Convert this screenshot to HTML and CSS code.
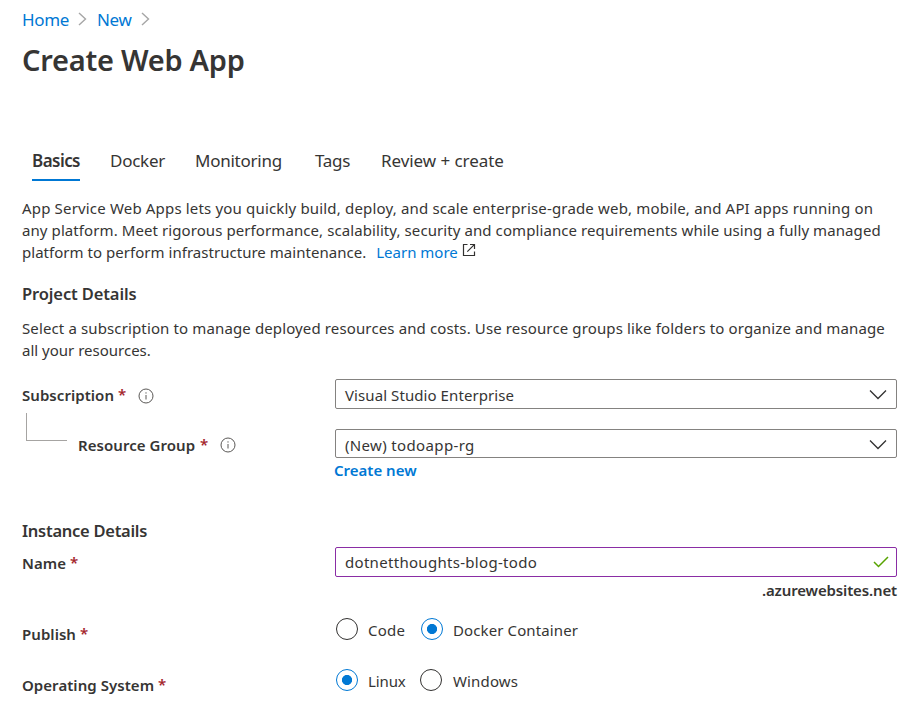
FILE: index.html
```
<!DOCTYPE html>
<html lang="en">
<head>
<meta charset="utf-8">
<title>Create Web App</title>
<link rel="stylesheet" href="styles.css">
</head>
<body>
<main class="page">
  <nav class="crumbs">
    <a>Home</a>
    <svg width="9" height="14" viewBox="0 0 9 14"><path d="M1 1l6.500 6L1 13"/></svg>
    <a class="crumb-new">New</a>
    <svg width="9" height="14" viewBox="0 0 9 14"><path d="M1 1l6.500 6L1 13"/></svg>
  </nav>
  <h1>Create Web App</h1>
  <div class="tabs">
    <a class="tab active">Basics</a>
    <a class="tab docker">Docker</a>
    <a class="tab monitoring">Monitoring</a>
    <a class="tab tags">Tags</a>
    <a class="tab review">Review + create</a>
  </div>
  <p class="intro">
    <span class="line l1">App Service Web Apps lets you quickly build, deploy, and scale enterprise-grade web, mobile, and API apps running on</span>
    <span class="line l2">any platform. Meet rigorous performance, scalability, security and compliance requirements while using a fully managed</span>
    <span class="line l3"><span>platform to perform infrastructure maintenance.</span><a class="learn">Learn more</a><svg class="external" width="14" height="14" viewBox="0 0 14 14"><path d="M5.500 1.500H1.500V12.500H12.500V8.500M8 1.500H12.500V6M12.300 1.700L5.300 8.700"/></svg></span>
  </p>
  <h2 class="project">Project Details</h2>
  <p class="project-text">
    <span class="line l4">Select a subscription to manage deployed resources and costs. Use resource groups like folders to organize and manage</span>
    <span class="line">all your resources.</span>
  </p>

  <div class="row subscription">
    <div class="label"><span>Subscription</span><i>*</i>
      <svg class="info" width="16" height="16" viewBox="0 0 16 16"><circle cx="8" cy="8" r="7"/><path d="M8 7v4.500M8 4.300v1.300"/></svg>
    </div>
    <div class="box"><span class="vs">Visual Studio Enterprise</span>
      <svg class="chevron" width="18" height="11" viewBox="0 0 18 11"><path d="M1 1.500l8 8 8-8"/></svg>
    </div>
  </div>
  <div class="row group">
    <div class="label"><b class="branch"></b><span>Resource Group</span><i>*</i>
      <svg class="info" width="16" height="16" viewBox="0 0 16 16"><circle cx="8" cy="8" r="7"/><path d="M8 7v4.500M8 4.300v1.300"/></svg>
    </div>
    <div>
      <div class="box short"><span class="rg">(New) todoapp-rg</span>
        <svg class="chevron" width="18" height="11" viewBox="0 0 18 11"><path d="M1 1.500l8 8 8-8"/></svg>
      </div>
      <a class="create">Create new</a>
    </div>
  </div>

  <h2 class="instance">Instance Details</h2>
  <div class="row name">
    <div class="label"><span>Name</span><i>*</i></div>
    <div>
      <div class="box valid"><span class="app">dotnetthoughts-blog-todo</span>
        <svg class="check" width="16" height="12" viewBox="0 0 16 12"><path d="M1 6l4.500 4.500L15 1"/></svg>
      </div>
      <div class="suffix">.azurewebsites.net</div>
    </div>
  </div>
  <div class="row publish">
    <div class="label"><span>Publish</span><i>*</i></div>
    <div class="radios">
      <b class="radio"></b><span class="first code">Code</span>
      <b class="radio on"></b><span class="dc">Docker Container</span>
    </div>
  </div>
  <div class="row os">
    <div class="label"><span>Operating System</span><i>*</i></div>
    <div class="radios">
      <b class="radio on"></b><span class="first linux">Linux</span>
      <b class="radio"></b><span class="win">Windows</span>
    </div>
  </div>
</main>
</body>
</html>
```
FILE: styles.css
```
* { box-sizing: border-box; }
body {
  margin: 0;
  background: #fff;
  color: #363534;
  font: 15px/22px "Noto Sans", "Open Sans", sans-serif;
}
.page { height: 707px; padding: 7px 20px 0 22px; overflow: hidden; }
h1, h2, p { margin: 0; }
a { color: #0078d4; }
svg { display: block; fill: none; flex: none; }

.crumbs { display: flex; align-items: flex-start; height: 24px; font-size: 17px; line-height: 26px; letter-spacing: -0.35px; }
.crumbs svg { margin: 5px 10px 0 9px; stroke: #a6a6a6; stroke-width: 1.4; }
.crumb-new { letter-spacing: -0.3px; }
h1 { margin-top: 9px; font-size: 29px; font-weight: 600; line-height: 40px; letter-spacing: -0.26px; white-space: nowrap; }

.tabs { display: flex; margin: 68px 0 0 10px; font-size: 17px; line-height: 26px; white-space: nowrap; }
.tab { height: 33px; color: #363534; }
.active { width: 48px; border-bottom: 2px solid #0078d4; font-weight: 600; letter-spacing: -0.55px; }
.docker { margin-left: 30px; width: 55px; letter-spacing: -0.25px; }
.monitoring { margin-left: 30px; width: 87px; letter-spacing: -0.25px; }
.tags { margin-left: 33px; width: 35px; letter-spacing: -0.3px; }
.review { margin-left: 31px; letter-spacing: -0.06px; }

.intro { margin-top: 16px; }
.line { display: block; white-space: nowrap; }
.l1 { letter-spacing: 0.171px; }
.l2 { letter-spacing: 0.085px; }
.l3 { display: flex; letter-spacing: 0.03px; }
.l4 { letter-spacing: 0.127px; }
.learn { margin-left: 10px; letter-spacing: 0; }
.external { margin: 2px 0 0 4px; stroke: #323130; stroke-width: 1.2; }
h2 { font-size: 16.5px; font-weight: 600; line-height: 24px; white-space: nowrap; }
.project { margin-top: 19px; letter-spacing: -0.12px; }
.project-text { margin-top: 11px; }

.row { display: grid; grid-template-columns: 313px 562px; }
.label { display: flex; height: 22px; margin-top: 5px; font-weight: 600; letter-spacing: 0.05px; white-space: nowrap; }
.label i { margin: -1px 0 0 4px; color: #a4262c; font-style: normal; }
.info { margin: 4px 0 0 12px; stroke: #5a5856; stroke-width: 1; }
.group .info { margin-top: 3px; }
.box {
  display: flex;
  justify-content: space-between;
  height: 30px;
  padding: 4px 9px 0 9px;
  border: 1px solid #848280;
  border-radius: 2px;
  white-space: nowrap;
}
.short { height: 29px; }
.chevron { margin-top: 5px; stroke: #323130; stroke-width: 1.3; }
.vs { letter-spacing: 0.08px; }
.rg { letter-spacing: 0.35px; }
.app { letter-spacing: 0.3px; }
.subscription { margin-top: 18px; }
.group { margin-top: 20px; }
.group .label i { margin-left: 5px; }
.branch { width: 41px; height: 28px; margin: -21px 11px 0 4px; border: solid #a6a4a2; border-width: 0 0 1px 1px; }
.create { display: block; margin: 1px 0 0 -1px; font-weight: 600; letter-spacing: 0; }
.instance { margin-top: 38px; letter-spacing: -0.27px; }
.name { margin-top: 4px; }
.valid { padding: 3px 7px 0 9px; border-color: #8a2da5; }
.check { margin-top: 5px; stroke: #57a300; stroke-width: 1.5; }
.suffix { margin-top: 2px; font-weight: 600; text-align: right; letter-spacing: -0.14px; }
.radios { display: flex; align-items: flex-start; white-space: nowrap; }
.radios span { margin: 1px 0 0 10px; }
.radio { width: 22px; height: 22px; margin-left: 1px; border: 1px solid #323130; border-radius: 50%; }
.radios .first { width: 52px; }
.radios .linux { width: 51px; letter-spacing: -0.1px; }
.radios .win { margin-left: 11px; letter-spacing: 0.15px; }
.code { letter-spacing: 0.25px; }
.radio.on { border-color: #0078d4; background: radial-gradient(circle, #0078d4 4.7px, transparent 5.4px); }
.dc { letter-spacing: 0.11px; }
.publish { margin-top: 17px; }
.os { margin-top: 24px; }
```
